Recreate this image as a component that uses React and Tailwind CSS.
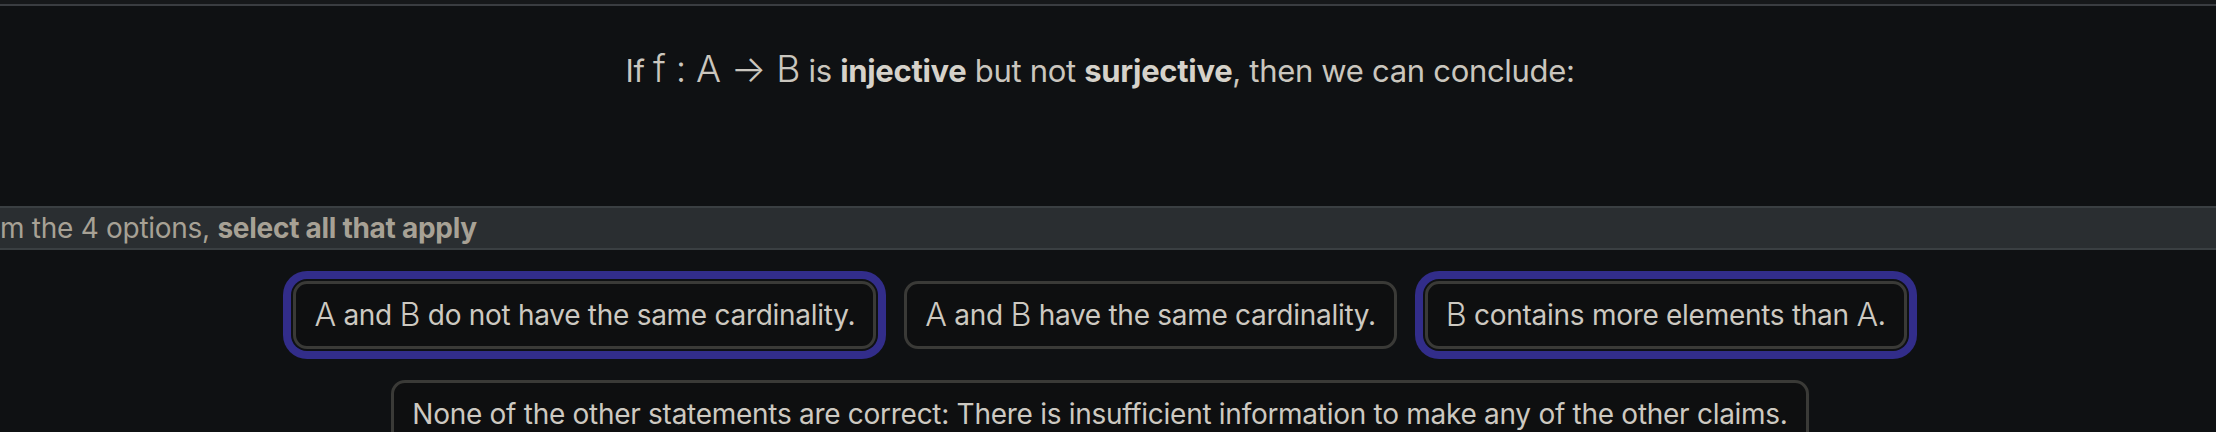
import React from 'react';

const options = [
  { id: 1, selected: true, parts: [['m', 'A'], ' and ', ['m', 'B'], ' do not have the same cardinality.'] },
  { id: 2, selected: false, parts: [['m', 'A'], ' and ', ['m', 'B'], ' have the same cardinality.'] },
  { id: 3, selected: true, parts: [['m', 'B'], ' contains more elements than ', ['m', 'A'], '.'] },
  {
    id: 4,
    selected: false,
    parts: ['None of the other statements are correct: There is insufficient information to make any of the other claims.'],
  },
];

// math glyphs render a bit larger and lighter than the body text
function M({ children }) {
  return <span className="text-[1.15em] font-light leading-none">{children}</span>;
}

function Option({ opt }) {
  const ring = opt.selected ? 'shadow-[0_0_0_2px_#0f1113,0_0_0_10px_#322d8a]' : '';
  return (
    <button
      className={`h-[68px] px-[18px] flex items-center rounded-[14px] border-[3px] border-[#3a3a37] bg-[#0e0f10] text-[28px] tracking-[-0.01em] text-[#cdc9c1] whitespace-nowrap ${ring}`}
    >
      {opt.parts.map((p, i) => (typeof p === 'string' ? <span key={i} className="whitespace-pre">{p}</span> : <M key={i}>{p[1]}</M>))}
    </button>
  );
}

export default function App() {
  return (
    <div className="min-h-screen bg-[#0f1113] overflow-hidden" style={{ fontFamily: 'Inter, "Noto Sans", sans-serif' }}>
      <div className="h-[4px] bg-[#16181a]" />
      <div className="h-[2px] bg-[#3a3d41]" />

      {/* question */}
      <div className="h-[200px] pr-4 pt-[44px]">
        <p className="text-center text-[31px] leading-[40px] tracking-[-0.01em] text-[#cac6be]">
          If <span className="text-[1.2em] font-light leading-none">f : A → B</span> is{' '}
          <b className="font-bold text-[#d6d2ca]">injective</b> but not <b className="font-bold text-[#d6d2ca]">surjective</b>, then we
          can conclude:
        </p>
      </div>

      {/* instruction band */}
      <div className="h-[44px] border-y-2 border-[#3a3f42] bg-[#2a2e31] overflow-hidden flex items-center">
        <p className="flex whitespace-nowrap text-[28px] tracking-[-0.01em] text-[#a7a195]">
          <span className="w-0 flex justify-end">Fro</span>
          <span className="whitespace-pre">m the 4 options, </span>
          <b className="font-bold">select all that apply</b>
        </p>
      </div>

      {/* options */}
      <div className="pr-4 pt-[31px] flex flex-wrap justify-center gap-x-[28px] gap-y-[31px]">
        {options.map(o => (
          <Option key={o.id} opt={o} />
        ))}
      </div>
    </div>
  );
}
